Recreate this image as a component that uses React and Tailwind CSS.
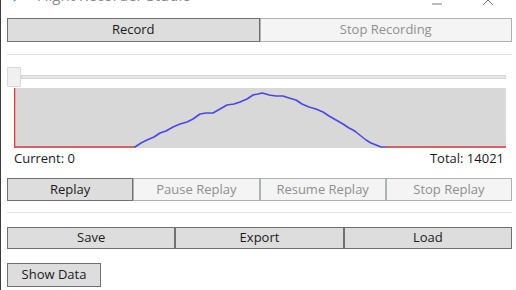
import React from 'react';

const font = { fontFamily: '"Open Sans", "Liberation Sans", sans-serif' };

function Btn({ children, enabled, className = '' }) {
    return (
        <div
            className={`flex items-center justify-center border text-[13px] ${enabled ? 'bg-[#dddddd] border-[#707070] text-[#1a1a1a]' : 'bg-[#f4f4f4] border-[#adb2b5] text-[#8f8f8f]'} ${className}`}
        >
            {children}
        </div>
    );
}

const curve = [
    [121, 59], [127, 55], [133, 52], [140, 49], [146, 45], [152, 43], [159, 39], [166, 36], [173, 34],
    [179, 31], [186, 26], [192, 25], [199, 25], [206, 21], [213, 17], [220, 16], [226, 14], [233, 11],
    [239, 7], [244, 6], [248, 5], [252, 6], [255, 7], [262, 8], [269, 8], [275, 10], [282, 12], [288, 16],
    [295, 19], [302, 21], [309, 24], [315, 28], [322, 32], [329, 36], [335, 40], [339, 42], [342, 44],
    [347, 48], [352, 52], [357, 55], [362, 57], [367, 59], [372, 59],
];

function Chart() {
    return (
        <div className="ml-[7px] mr-[6px] h-[60px] bg-[#d8d8d8]">
            <svg width="492" height="60" viewBox="0 0 492 60">
                <line x1="0.5" y1="0" x2="0.5" y2="59.5" stroke="#e03a3a" strokeWidth="1.5" />
                <line x1="0" y1="59" x2="121" y2="59" stroke="#e03a3a" strokeWidth="1.5" />
                <polyline
                    points={curve.map(p => p.join(',')).join(' ')}
                    fill="none"
                    stroke="#4848e8"
                    strokeWidth="1.6"
                    strokeLinejoin="round"
                    strokeLinecap="round"
                />
                <line x1="372" y1="59" x2="492" y2="59" stroke="#e03a3a" strokeWidth="1.5" />
            </svg>
        </div>
    );
}

export default function App() {
    return (
        <div style={font} className="w-[516px] h-[290px] overflow-hidden bg-white border-l border-[#3c3c3c] pl-[6px] pr-[4px] flex flex-col">
            {/* Title bar (cropped) */}
            <div className="h-[18px] overflow-hidden -ml-[6px] -mr-[4px]">
                <div className="-mt-[15px] h-[20px] flex items-center pl-[10px] pr-[10px] text-[#8a8a8a] text-[15px]">
                    <svg width="16" height="16" viewBox="0 0 16 16" className="mr-[10px] mt-[2px]">
                        <path d="M2 14 L8 4 L14 2 L12 8 Z" fill="#2b8be0" />
                    </svg>
                    <span>Flight Recorder Studio</span>
                    <div className="flex-1" />
                    <svg width="80" height="20" viewBox="0 0 80 20">
                        <line x1="6" y1="19" x2="16" y2="19" stroke="#7a7a7a" strokeWidth="1" />
                        <line x1="57" y1="10" x2="67" y2="20" stroke="#7a7a7a" strokeWidth="1" />
                        <line x1="67" y1="10" x2="57" y2="20" stroke="#7a7a7a" strokeWidth="1" />
                    </svg>
                </div>
            </div>

            {/* Record row */}
            <div className="flex h-[24px]">
                <Btn enabled className="flex-1">Record</Btn>
                <Btn className="flex-1">Stop Recording</Btn>
            </div>

            <div className="mt-[12px] h-px bg-[#e2e2e2]" />

            {/* Slider */}
            <div className="mt-[12px] h-[20px] relative">
                <div className="absolute left-[14px] right-[6px] top-[8px] h-[4px] bg-[#e7e7e7] border border-[#d6d6d6]" />
                <div className="absolute left-0 top-0 w-[14px] h-[20px] bg-[#f0f0f0] border border-[#d9d9d9] rounded-[1px]" />
            </div>

            <div className="mt-[1px]">
                <Chart />
            </div>

            <div className="ml-[7px] mr-[8px] mt-[2px] h-[18px] flex items-center justify-between text-[13px] text-[#1a1a1a]">
                <span>Current: 0</span>
                <span>Total: 14021</span>
            </div>

            {/* Replay row */}
            <div className="mt-[10px] flex h-[23px]">
                <Btn enabled className="flex-1">Replay</Btn>
                <Btn className="flex-1">Pause Replay</Btn>
                <Btn className="flex-1">Resume Replay</Btn>
                <Btn className="flex-1">Stop Replay</Btn>
            </div>

            <div className="mt-[11px] h-px bg-[#e2e2e2]" />

            {/* File row */}
            <div className="mt-[14px] flex h-[22px]">
                <Btn enabled className="flex-1">Save</Btn>
                <Btn enabled className="flex-1">Export</Btn>
                <Btn enabled className="flex-1">Load</Btn>
            </div>

            <div className="mt-[14px]">
                <Btn enabled className="w-[94px] h-[24px]">Show Data</Btn>
            </div>
        </div>
    );
}
